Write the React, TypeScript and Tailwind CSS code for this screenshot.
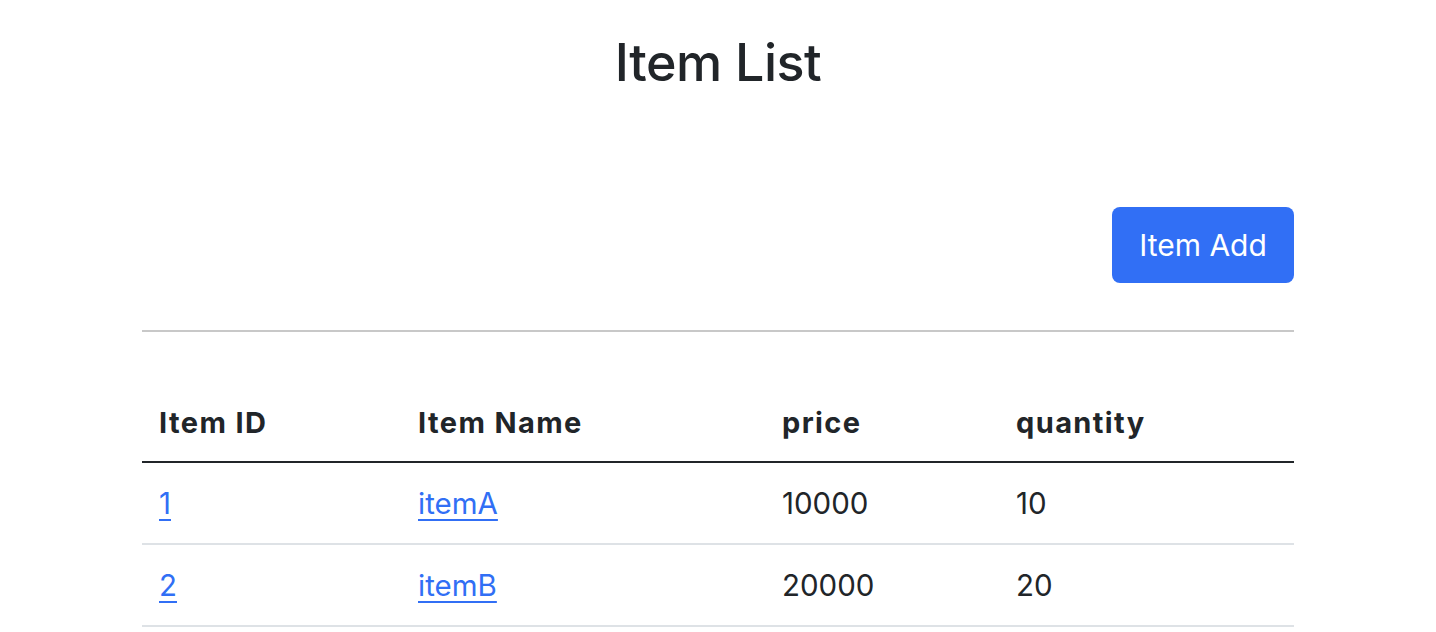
export default function App() {
  const items = [
    { id: 1, name: "itemA", price: 10000, quantity: 10 },
    { id: 2, name: "itemB", price: 20000, quantity: 20 },
  ];

  return (
    <div className="min-h-screen bg-white text-[#212529] font-['Inter','Liberation_Sans',sans-serif]">
      <div className="w-[1152px] mx-auto">
        {/* Title */}
        <div className="pt-[28px] h-[145px] text-center">
          <h2 className="text-[52px] leading-[69px] font-medium tracking-[-0.5px]">Item List</h2>
        </div>

        {/* Add button */}
        <div className="flex justify-end pt-[62px]">
          <button className="w-[182px] h-[76px] rounded-[8px] bg-[#316ff5] text-white text-[30px]">
            Item Add
          </button>
        </div>

        <hr className="mt-[47px] border-t-2 border-[#c8c8c8]" />

        {/* Table */}
        <table className="mt-[49px] w-full text-[29.5px] border-collapse">
          <thead>
            <tr className="h-[81px] border-b-2 border-[#212529] text-left text-[29px] tracking-[1.4px]">
              <th className="w-[259px] pl-[17px] pt-[4px] font-bold">Item ID</th>
              <th className="w-[364px] pl-[17px] pt-[4px] font-bold">Item Name</th>
              <th className="w-[234px] pl-[17px] pt-[4px] font-bold">price</th>
              <th className="pl-[17px] pt-[4px] font-bold">quantity</th>
            </tr>
          </thead>
          <tbody>
            {items.map((item) => (
              <tr key={item.id} className="h-[82px] border-b-2 border-[#dee2e6]">
                <td className="pl-[17px]">
                  <a href="#" className="text-[#316ff5] underline underline-offset-[5px]">
                    {item.id}
                  </a>
                </td>
                <td className="pl-[17px]">
                  <a href="#" className="text-[#316ff5] underline underline-offset-[5px]">
                    {item.name}
                  </a>
                </td>
                <td className="pl-[17px]">{item.price}</td>
                <td className="pl-[17px]">{item.quantity}</td>
              </tr>
            ))}
          </tbody>
        </table>
      </div>
    </div>
  );
}
